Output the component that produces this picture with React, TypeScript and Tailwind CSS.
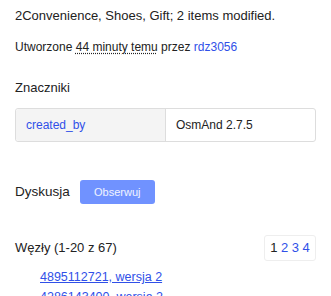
import React from 'react';

const font = { fontFamily: '"Liberation Sans", Arial, sans-serif' };

const App: React.FC = () => {
  return (
    <div style={font} className="w-[331px] h-[296px] overflow-hidden bg-white text-[13px] text-[#222]">
      <div className="px-[15px]">
        <p className="leading-[20px] -mt-[19px]">
          <span className="block whitespace-nowrap mb-[5px]">
            Tags: shop (Stationery), amenity, shop (Bakery, Jewelry),
          </span>
          <span className="block whitespace-nowrap">2Convenience, Shoes, Gift; 2 items modified.</span>
        </p>

        <p className="mt-[11px] leading-[20px] text-[12px]">
          Utworzone{' '}
          <abbr className="underline decoration-dotted underline-offset-2" title="">
            44 minuty temu
          </abbr>{' '}
          przez <a className="text-[#3050e8]">rdz3056</a>
        </p>

        <h4 className="mt-[21px] leading-[20px]">Znaczniki</h4>

        <div className="mt-[10px] flex border border-[#ddd] rounded-[3px] h-[34px] text-[12px]">
          <div className="w-[150px] bg-[#f4f4f4] border-r border-[#ddd] flex items-center pl-[10px] text-[#3050e8] rounded-l-[3px]">
            created_by
          </div>
          <div className="flex-1 flex items-center pl-[10px]">OsmAnd 2.7.5</div>
        </div>

        <div className="mt-[38px] flex items-center gap-[10px] h-[24px]">
          <span className="text-[13.5px]">Dyskusja</span>
          <button className="bg-[#7092ff] text-white/90 rounded-[3px] w-[75px] h-[24px] text-[11px]">
            Obserwuj
          </button>
        </div>

        <div className="mt-[31px] flex items-center justify-between h-[26px]">
          <span>Węzły (1-20 z 67)</span>
          <div className="border border-[#eee] rounded-[3px] h-[26px] w-[52px] flex items-center justify-center gap-[3.5px]">
            <span>1</span>
            <a className="text-[#3050e8]">2</a>
            <a className="text-[#3050e8]">3</a>
            <a className="text-[#3050e8]">4</a>
          </div>
        </div>

        <ul className="mt-[6px] pl-[25px] leading-[20px] text-[12.5px]">
          <li>
            <a className="text-[#3050e8] underline line-through">4895112721, wersja 2</a>
          </li>
          <li>
            <a className="text-[#3050e8] underline">4286143400, wersja 2</a>
          </li>
        </ul>
      </div>
    </div>
  );
};

export default App;
